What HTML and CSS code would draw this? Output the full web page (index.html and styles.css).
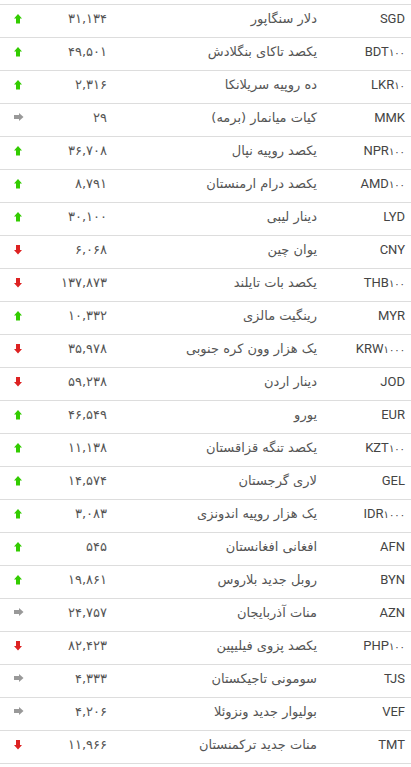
FILE: index.html
```html
<!DOCTYPE html>
<html lang="fa" dir="rtl">
<head>
<meta charset="utf-8">
<title>نرخ ارز</title>
<link rel="stylesheet" href="styles.css">
</head>
<body>
<svg width="0" height="0" class="defs" aria-hidden="true">
  <defs>
    <path id="a-up" d="M4 0 L8 4.5 L6 4.5 L6 9.5 L2 9.5 L2 4.5 L0 4.5 Z"/>
    <path id="a-down" d="M4 9.5 L8 5 L6 5 L6 0 L2 0 L2 5 L0 5 Z"/>
    <path id="a-same" d="M9.5 4 L5 8 L5 6 L0 6 L0 2 L5 2 L5 0 Z"/>
  </defs>
</svg>
<div class="table">
  <div class="row"><div class="code">SGD</div><div class="name">دلار سنگاپور</div><div class="val">۳۱,۱۳۴</div><div class="trend"><svg class="up" viewBox="0 0 10 10"><use href="#a-up"/></svg></div></div>
  <div class="row"><div class="code">BDT<small>۱۰۰</small></div><div class="name">یکصد تاکای بنگلادش</div><div class="val">۴۹,۵۰۱</div><div class="trend"><svg class="up" viewBox="0 0 10 10"><use href="#a-up"/></svg></div></div>
  <div class="row"><div class="code">LKR<small>۱۰</small></div><div class="name">ده روپیه سریلانکا</div><div class="val">۲,۳۱۶</div><div class="trend"><svg class="up" viewBox="0 0 10 10"><use href="#a-up"/></svg></div></div>
  <div class="row"><div class="code">MMK</div><div class="name">کیات میانمار (برمه)</div><div class="val">۲۹</div><div class="trend"><svg class="same" viewBox="0 0 10 10"><use href="#a-same"/></svg></div></div>
  <div class="row"><div class="code">NPR<small>۱۰۰</small></div><div class="name">یکصد روپیه نپال</div><div class="val">۳۶,۷۰۸</div><div class="trend"><svg class="up" viewBox="0 0 10 10"><use href="#a-up"/></svg></div></div>
  <div class="row"><div class="code">AMD<small>۱۰۰</small></div><div class="name">یکصد درام ارمنستان</div><div class="val">۸,۷۹۱</div><div class="trend"><svg class="up" viewBox="0 0 10 10"><use href="#a-up"/></svg></div></div>
  <div class="row"><div class="code">LYD</div><div class="name">دینار لیبی</div><div class="val">۳۰,۱۰۰</div><div class="trend"><svg class="up" viewBox="0 0 10 10"><use href="#a-up"/></svg></div></div>
  <div class="row"><div class="code">CNY</div><div class="name">یوان چین</div><div class="val">۶,۰۶۸</div><div class="trend"><svg class="down" viewBox="0 0 10 10"><use href="#a-down"/></svg></div></div>
  <div class="row"><div class="code">THB<small>۱۰۰</small></div><div class="name">یکصد بات تایلند</div><div class="val">۱۳۷,۸۷۳</div><div class="trend"><svg class="down" viewBox="0 0 10 10"><use href="#a-down"/></svg></div></div>
  <div class="row"><div class="code">MYR</div><div class="name">رینگیت مالزی</div><div class="val">۱۰,۳۳۲</div><div class="trend"><svg class="up" viewBox="0 0 10 10"><use href="#a-up"/></svg></div></div>
  <div class="row"><div class="code">KRW<small>۱۰۰۰</small></div><div class="name">یک هزار وون کره جنوبی</div><div class="val">۳۵,۹۷۸</div><div class="trend"><svg class="down" viewBox="0 0 10 10"><use href="#a-down"/></svg></div></div>
  <div class="row"><div class="code">JOD</div><div class="name">دینار اردن</div><div class="val">۵۹,۲۳۸</div><div class="trend"><svg class="down" viewBox="0 0 10 10"><use href="#a-down"/></svg></div></div>
  <div class="row"><div class="code">EUR</div><div class="name">یورو</div><div class="val">۴۶,۵۴۹</div><div class="trend"><svg class="up" viewBox="0 0 10 10"><use href="#a-up"/></svg></div></div>
  <div class="row"><div class="code">KZT<small>۱۰۰</small></div><div class="name">یکصد تنگه قزاقستان</div><div class="val">۱۱,۱۳۸</div><div class="trend"><svg class="up" viewBox="0 0 10 10"><use href="#a-up"/></svg></div></div>
  <div class="row"><div class="code">GEL</div><div class="name">لاری گرجستان</div><div class="val">۱۴,۵۷۴</div><div class="trend"><svg class="up" viewBox="0 0 10 10"><use href="#a-up"/></svg></div></div>
  <div class="row"><div class="code">IDR<small>۱۰۰۰</small></div><div class="name">یک هزار روپیه اندونزی</div><div class="val">۳,۰۸۳</div><div class="trend"><svg class="up" viewBox="0 0 10 10"><use href="#a-up"/></svg></div></div>
  <div class="row"><div class="code">AFN</div><div class="name">افغانی افغانستان</div><div class="val">۵۴۵</div><div class="trend"><svg class="up" viewBox="0 0 10 10"><use href="#a-up"/></svg></div></div>
  <div class="row"><div class="code">BYN</div><div class="name">روبل جدید بلاروس</div><div class="val">۱۹,۸۶۱</div><div class="trend"><svg class="up" viewBox="0 0 10 10"><use href="#a-up"/></svg></div></div>
  <div class="row"><div class="code">AZN</div><div class="name">منات آذربایجان</div><div class="val">۲۴,۷۵۷</div><div class="trend"><svg class="same" viewBox="0 0 10 10"><use href="#a-same"/></svg></div></div>
  <div class="row"><div class="code">PHP<small>۱۰۰</small></div><div class="name">یکصد پزوی فیلیپین</div><div class="val">۸۲,۴۲۳</div><div class="trend"><svg class="down" viewBox="0 0 10 10"><use href="#a-down"/></svg></div></div>
  <div class="row"><div class="code">TJS</div><div class="name">سومونی تاجیکستان</div><div class="val">۴,۳۳۳</div><div class="trend"><svg class="same" viewBox="0 0 10 10"><use href="#a-same"/></svg></div></div>
  <div class="row"><div class="code">VEF</div><div class="name">بولیوار جدید ونزوئلا</div><div class="val">۴,۲۰۶</div><div class="trend"><svg class="same" viewBox="0 0 10 10"><use href="#a-same"/></svg></div></div>
  <div class="row"><div class="code">TMT</div><div class="name">منات جدید ترکمنستان</div><div class="val">۱۱,۹۶۶</div><div class="trend"><svg class="down" viewBox="0 0 10 10"><use href="#a-down"/></svg></div></div>
</div>
</body>
</html>
```
FILE: styles.css
```css
html, body {
  margin: 0;
  padding: 0;
  background: #fff;
}
body {
  font-family: "DejaVu Sans", sans-serif;
  color: #555;
  font-size: 13px;
}
.defs {
  position: absolute;
  width: 0;
  height: 0;
}
.table {
  margin-top: 4px;
  border-bottom: 1px solid #ddd;
}
.row {
  display: grid;
  grid-template-columns: 94px 1fr 70px 37px;
  align-items: center;
  height: 26px;
  padding-bottom: 6px;
  border-top: 1px solid #ddd;
  box-sizing: content-box;
}
.code {
  direction: ltr;
  text-align: right;
  padding-right: 6px;
  font-family: Roboto, "Liberation Sans", sans-serif;
  font-size: 13px;
  color: #444;
}
.code small {
  font-family: "DejaVu Sans", sans-serif;
  font-size: 10px;
}
.name {
  text-align: right;
  white-space: nowrap;
}
.val {
  text-align: right;
}
.trend {
  display: flex;
  justify-content: center;
  padding-top: 1px;
}
.trend svg {
  width: 10px;
  height: 10px;
}
.up { fill: #33cc00; }
.down { fill: #dd2222; }
.same { fill: #999; }
```
